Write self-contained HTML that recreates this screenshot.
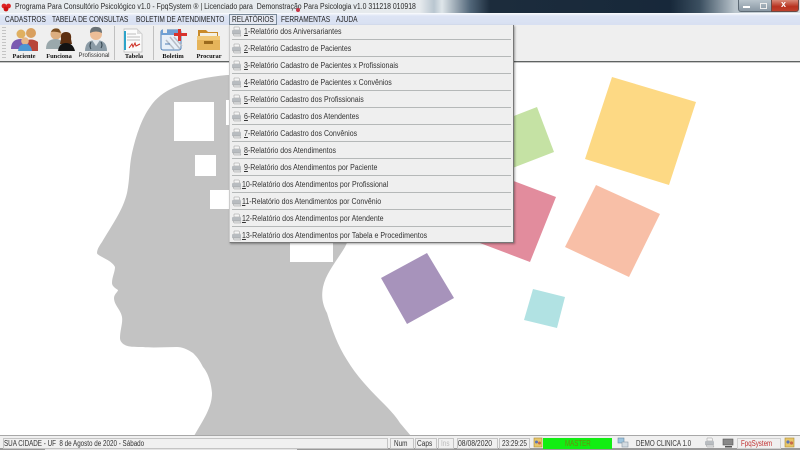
<!DOCTYPE html>
<html><head><meta charset="utf-8"><style>
html,body{margin:0;padding:0}
body{width:800px;height:450px;overflow:hidden;position:relative;background:#fff;font-family:"Liberation Sans",sans-serif;color:#222}
div,span,svg{position:absolute}
.t{white-space:nowrap;font-size:8px;line-height:11px;color:#2a2a2a;transform-origin:0 50%}
u{text-decoration:underline}
.m{white-space:nowrap;font-size:8px;line-height:11px;top:14px;color:#222;transform:scaleX(.82);transform-origin:0 50%}
.tb{white-space:nowrap;font-size:6.4px;font-weight:bold;top:52px;line-height:9px;text-align:center;font-family:"Liberation Serif",serif;color:#111}
.i{left:242px;white-space:nowrap;font-size:8px;line-height:11px;color:#333;transform:scaleX(.877);transform-origin:0 50%}
.sep{left:232px;width:279px;height:1px;background:#b5b8b8}
.pr{left:231px;width:12px;height:12px}
.p{top:438px;height:9px;border:1px solid #c4c4c4;background:#f0f0f0}
.s{top:438px;white-space:nowrap;font-size:8px;line-height:11px;color:#333;transform-origin:0 50%}
</style></head><body>
<!-- Title bar -->
<div style="left:0;top:0;width:800px;height:13px;background:linear-gradient(90deg,#e8ecef 0,#e6eaed 420px,#b9c6d0 434px,#dfe6ea 442px,#52677a 470px,#1c2c3c 490px,#17283a 670px,#3c5061 700px,#b9c4cc 735px,#d6dde2 800px)"></div>
<svg style="left:1px;top:2px" width="11" height="10"><circle cx="3" cy="4" r="2.4" fill="#d22"/><circle cx="7.5" cy="4" r="2.4" fill="#d22"/><circle cx="5" cy="7" r="2.4" fill="#c11"/></svg>
<div class="t" style="left:15px;top:1px;transform:scaleX(.863)">Programa Para Consultório Psicológico v1.0 - FpqSystem ® | Licenciado para&nbsp; Demonstração Para Psicologia v1.0 311218 010918</div>
<div style="left:296px;top:8px;width:4px;height:4px;border-radius:2px;background:#c8384a"></div>
<!-- window buttons -->
<div style="left:738px;top:0;width:17px;height:11px;background:linear-gradient(#b8c4cc,#8a98a4);border:1px solid #5d6a75;border-top:0;border-radius:0 0 0 3px"></div>
<div style="left:743px;top:6px;width:7px;height:2px;background:#fff"></div>
<div style="left:756px;top:0;width:15px;height:11px;background:linear-gradient(#b8c4cc,#8a98a4);border-bottom:1px solid #5d6a75"></div>
<div style="left:760px;top:3px;width:5px;height:4px;border:1px solid #eee"></div>
<div style="left:771px;top:0;width:26px;height:11px;background:linear-gradient(#d98a78,#b8321f 60%,#c0402c);border:1px solid #6a4a45;border-top:0;border-radius:0 0 3px 0"></div>
<div style="left:781px;top:-1px;font-size:9px;font-weight:bold;line-height:11px;color:#fff">x</div>
<!-- Menu bar -->
<div style="left:0;top:13px;width:800px;height:12px;background:linear-gradient(#fbfcfe 0,#dde4f4 25%,#d8e0f2 100%)"></div>
<div class="m" style="left:5px">CADASTROS</div>
<div class="m" style="left:52px">TABELA DE CONSULTAS</div>
<div class="m" style="left:136px">BOLETIM DE ATENDIMENTO</div>
<div style="left:229px;top:14px;width:46px;height:9px;border:1px solid #7a8a9a;background:#e4e8f2"></div>
<div class="m" style="left:232px">RELATÓRIOS</div>
<div class="m" style="left:281px">FERRAMENTAS</div>
<div class="m" style="left:336px">AJUDA</div>
<!-- Toolbar -->
<div style="left:0;top:25px;width:800px;height:36px;background:#efefef"></div>
<div style="left:0;top:61px;width:800px;height:1px;background:#5f6362"></div>
<div style="left:0;top:62px;width:800px;height:1px;background:#c8c8c8"></div>
<div style="left:2px;top:27px;width:4px;height:32px;background:repeating-linear-gradient(#c4c4c4 0 1px,transparent 1px 3px)"></div>
<div style="left:114px;top:26px;width:1px;height:34px;background:#c0c0c0"></div>
<div style="left:153px;top:26px;width:1px;height:34px;background:#c0c0c0"></div>
<!-- Paciente -->
<svg style="left:8px;top:25px" width="34" height="26"><circle cx="23" cy="8" r="5" fill="#d9a05f"/><path d="M16 26v-9q7-5 14 0v9z" fill="#b8453a"/><circle cx="13" cy="9" r="4.5" fill="#e0b060"/><path d="M3 24q0-10 10-10 6 0 8 6v4z" fill="#7a5ab0"/><circle cx="17" cy="16" r="3.8" fill="#e6b587"/><path d="M10 26q1-7 7-7t7 7z" fill="#4b96d2"/></svg>
<!-- Funciona -->
<svg style="left:45px;top:25px" width="32" height="26"><circle cx="11" cy="9" r="5.5" fill="#dcae80"/><path d="M6 7q2-5 8-3l2 4q-6-2-10-1z" fill="#7b4f22"/><path d="M1 24q0-10 10-10 6 0 9 8v2z" fill="#9aa8ac"/><circle cx="21" cy="13" r="4.5" fill="#e0b48c"/><path d="M16 14q-1-7 5-7t5 7l1 5h-12z" fill="#5d2f10"/><path d="M13 26q1-8 8-8t9 8z" fill="#131313"/></svg>
<!-- Profissional -->
<svg style="left:82px;top:25px" width="28" height="26"><circle cx="14" cy="9" r="6" fill="#ecbd97"/><path d="M8 8q0-7 7-6 5 0 5 6-6-3-12 0z" fill="#6c7376"/><path d="M3 26q0-11 11-11t11 11z" fill="#8b9ba6"/><path d="M10 15l4 6 4-6z" fill="#dfe5ea"/><path d="M9 17q-2 4 0 7M19 17q2 3 0 6" stroke="#30404a" fill="none"/></svg>
<!-- Tabela -->
<svg style="left:122px;top:28px" width="22" height="25"><path d="M2 1h13l5 5v18H2z" fill="#fbfbfb" stroke="#b8b8b8" stroke-width=".7"/><path d="M15 1l5 5h-5z" fill="#ddd"/><rect x="2" y="3" width="2" height="19" fill="#2ca3c9"/><path d="M5 6h9M5 9h13M5 12h13" stroke="#aaa" stroke-width=".8"/><path d="M7 20l3-4 1 3 2-4 1 3 4-2" stroke="#cc2b20" stroke-width="1" fill="none"/></svg>
<!-- Boletim -->
<svg style="left:160px;top:27px" width="28" height="25"><rect x="1" y="3" width="20" height="20" rx="2" fill="#e8f0f8" stroke="#4f7fb6"/><rect x="1" y="3" width="20" height="5" fill="#6fa0d4"/><rect x="3" y="1" width="4" height="5" fill="#eee"/><path d="M10 10l10 12M14 10l8 9M6 13l8 9" stroke="#b7bdc6" stroke-width="1.5"/><rect x="14" y="6" width="13" height="3" fill="#d8332c"/><rect x="18" y="2" width="3" height="12" fill="#d8332c"/><path d="M5 17h5" stroke="#4f7fb6"/></svg>
<!-- Procurar -->
<svg style="left:196px;top:29px" width="25" height="22"><path d="M2 1h8l2 2h10v8H2z" fill="#c98a28"/><rect x="4" y="4" width="17" height="5" fill="#f4f0e2"/><path d="M1 7h23v14H1z" fill="#e6b45a"/><path d="M1 7h23v4H1z" fill="#f0c878"/><rect x="8" y="12" width="9" height="3" fill="#9b6a1d"/></svg>
<div class="tb" style="left:6px;width:36px">Paciente</div>
<div class="tb" style="left:42px;width:34px">Funciona</div>
<div class="tb" style="left:76px;width:36px;font-weight:normal;font-family:'Liberation Sans',sans-serif;font-size:6px;color:#333">Profissional</div>
<div class="tb" style="left:120px;width:28px">Tabela</div>
<div class="tb" style="left:158px;width:30px">Boletim</div>
<div class="tb" style="left:192px;width:34px">Procurar</div>
<!-- Background artwork -->
<svg style="left:0;top:63px" width="800" height="372" viewBox="0 63 800 372">
<path fill="#c3c3c3" d="M194 436C203 420 212 408 212 393C211 382 208 373 203 367C199 359 196 356 193 353C187 349 182 347 177 347C165 347 153 348 143 347C135 347 128 347 125 345C121 343 120 340 120 338C120 330 123 323 122 317C121 310 114 305 114 298C114 294 118 292 118 290C115 288 112 286 112 283C112 277 115 272 115 267C112 260 97 256 97 253C97 249 100 245 102 242C112 225 123 210 127 193C130 178 129 167 132 153C136 135 142 118 150 107C156 98 164 92 173 88C190 80 208 77 227 75L300 75L370 150L360 215L345 247C336 262 326 273 323 287C321 298 323 305 327 313C332 330 338 346 347 360C356 375 368 388 380 400C388 408 395 415 400 423L411 436Z"/>
<rect x="174" y="102" width="40" height="39" fill="#fff"/>
<rect x="195" y="155" width="21" height="21" fill="#fff"/>
<rect x="210" y="190" width="22" height="19" fill="#fff"/>
<rect x="226" y="100" width="6" height="25" fill="#fff"/>
<rect x="290" y="235" width="43" height="27" fill="#fff"/>
<polygon points="612,77 696,102 669,185 585,159" fill="#fdd984"/>
<polygon points="596,185 660,214 629,277 565,247" fill="#f8bfa7"/>
<polygon points="490,172 556,197 530,262 464,237" fill="#e28c9d"/>
<polygon points="537,107 554,152 510,169 493,124" fill="#c5e2a4"/>
<polygon points="427,253 454,298 407,324 381,278" fill="#a793bb"/>
<polygon points="533,289 565,297 557,328 524,320" fill="#b1e2e3"/>
</svg>
<!-- Dropdown menu -->
<div style="left:229px;top:25px;width:285px;height:218px;background:#efefef;border-right:1px solid #777;border-bottom:1px solid #777;border-left:1px solid #ccc;box-sizing:border-box;box-shadow:1px 1px 2px rgba(0,0,0,.35)"></div>
<div class="sep" style="top:39px"></div><div class="sep" style="top:56px"></div><div class="sep" style="top:73px"></div><div class="sep" style="top:90px"></div><div class="sep" style="top:107px"></div><div class="sep" style="top:124px"></div><div class="sep" style="top:141px"></div><div class="sep" style="top:158px"></div><div class="sep" style="top:175px"></div><div class="sep" style="top:192px"></div><div class="sep" style="top:209px"></div><div class="sep" style="top:226px"></div>
<svg width="0" height="0"><defs><g id="pr"><path d="M3 1h5l1 3H3z" fill="#f4f4f4" stroke="#999" stroke-width=".5"/><path d="M1 5q0-1 1-1h7q1 0 1 1v3H1z" fill="#b8bcc0"/><path d="M2 8h7l1 2H3z" fill="#e2e4e6" stroke="#999" stroke-width=".5"/></g></defs></svg>
<svg class="pr" style="top:26px"><use href="#pr"/></svg><svg class="pr" style="top:43px"><use href="#pr"/></svg><svg class="pr" style="top:60px"><use href="#pr"/></svg><svg class="pr" style="top:77px"><use href="#pr"/></svg><svg class="pr" style="top:94px"><use href="#pr"/></svg><svg class="pr" style="top:111px"><use href="#pr"/></svg><svg class="pr" style="top:128px"><use href="#pr"/></svg><svg class="pr" style="top:145px"><use href="#pr"/></svg><svg class="pr" style="top:162px"><use href="#pr"/></svg><svg class="pr" style="top:179px"><use href="#pr"/></svg><svg class="pr" style="top:196px"><use href="#pr"/></svg><svg class="pr" style="top:213px"><use href="#pr"/></svg><svg class="pr" style="top:230px"><use href="#pr"/></svg>
<div class="i" style="left:244px;top:26px"><u>1</u>-Relatório dos Aniversariantes</div>
<div class="i" style="left:244px;top:43px"><u>2</u>-Relatório Cadastro de Pacientes</div>
<div class="i" style="left:244px;top:60px"><u>3</u>-Relatório Cadastro de Pacientes x Profissionais</div>
<div class="i" style="left:244px;top:77px"><u>4</u>-Relatório Cadastro de Pacientes x Convênios</div>
<div class="i" style="left:244px;top:94px"><u>5</u>-Relatório Cadastro dos Profissionais</div>
<div class="i" style="left:244px;top:111px"><u>6</u>-Relatório Cadastro dos Atendentes</div>
<div class="i" style="left:244px;top:128px"><u>7</u>-Relatório Cadastro dos Convênios</div>
<div class="i" style="left:244px;top:145px"><u>8</u>-Relatório dos Atendimentos</div>
<div class="i" style="left:244px;top:162px"><u>9</u>-Relatório dos Atendimentos por Paciente</div>
<div class="i" style="top:179px"><u>1</u>0-Relatório dos Atendimentos por Profissional</div>
<div class="i" style="top:196px"><u>1</u>1-Relatório dos Atendimentos por Convênio</div>
<div class="i" style="top:213px"><u>1</u>2-Relatório dos Atendimentos por Atendente</div>
<div class="i" style="top:230px"><u>1</u>3-Relatório dos Atendimentos por Tabela e Procedimentos</div>
<!-- Status bar -->
<div style="left:0;top:435px;width:800px;height:13px;background:#f0f0f0;border-top:1px solid #a8a8a8;box-sizing:border-box"></div>
<div style="left:0;top:448px;width:800px;height:2px;background:#9a9a9a"></div>
<div style="left:45px;top:449px;width:252px;height:1px;background:#e4e4e4"></div>
<div class="p" style="left:3px;width:383px"></div>
<div class="s" style="left:4px;transform:scaleX(.784)">SUA CIDADE - UF&nbsp; 8 de Agosto de 2020 - Sábado</div>
<div class="p" style="left:390px;width:22px"></div>
<div class="s" style="left:394px;transform:scaleX(.8)">Num</div>
<div class="p" style="left:415px;width:20px"></div>
<div class="s" style="left:417px;transform:scaleX(.82)">Caps</div>
<div class="p" style="left:438px;width:14px"></div>
<div class="s" style="left:441px;color:#bbb;transform:scaleX(.8)">Ins</div>
<div class="p" style="left:457px;width:39px"></div>
<div class="s" style="left:458px;transform:scaleX(.85)">08/08/2020</div>
<div class="p" style="left:499px;width:29px"></div>
<div class="s" style="left:502px;transform:scaleX(.8)">23:29:25</div>
<div style="left:543px;top:438px;width:69px;height:11px;background:#12ee12"></div>
<div class="s" style="left:565px;color:#6a8a10;transform:scaleX(.77)">MASTER</div>
<svg style="left:533px;top:437px" width="10" height="11"><rect x="1" y="1" width="8" height="9" fill="#e6c66a" stroke="#b08a30" stroke-width=".6"/><circle cx="3.5" cy="5" r="1.5" fill="#5a74b8"/><circle cx="6.5" cy="6" r="1.5" fill="#c86a4a"/></svg>
<svg style="left:617px;top:437px" width="12" height="11"><rect x="1" y="1" width="6" height="5" fill="#9cc4de" stroke="#6a8aa0" stroke-width=".6"/><rect x="5" y="5" width="6" height="5" fill="#d4dce2" stroke="#8a9aa6" stroke-width=".6"/></svg>
<div class="s" style="left:636px;transform:scaleX(.78)">DEMO CLINICA 1.0</div>
<svg style="left:704px;top:437px" width="14" height="11"><use href="#pr"/></svg>
<svg style="left:722px;top:438px" width="13" height="10"><rect x="1" y="1" width="10" height="6" fill="#888" stroke="#555" stroke-width=".6"/><rect x="3" y="8" width="7" height="1.5" fill="#555"/></svg>
<div class="p" style="left:737px;width:42px;border-color:#d0d0d0"></div>
<div class="s" style="left:741px;color:#c03030;transform:scaleX(.77)">FpqSystem</div>
<svg style="left:784px;top:437px" width="12" height="11"><rect x="1" y="1" width="9" height="9" fill="#e6c66a" stroke="#b08a30" stroke-width=".6"/><circle cx="4" cy="5" r="1.6" fill="#5a74b8"/><circle cx="7.5" cy="6" r="1.6" fill="#c86a4a"/></svg>
</body></html>
